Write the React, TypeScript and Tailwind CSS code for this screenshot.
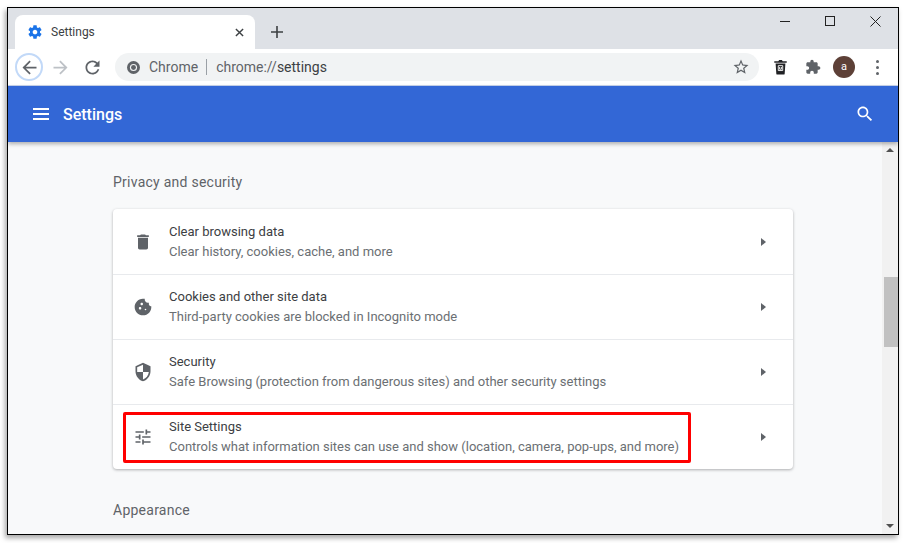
const paths = {
  back: 'M20 11H7.83l5.59-5.59L12 4l-8 8 8 8 1.41-1.41L7.83 13H20v-2z',
  forward: 'M12 4l-1.41 1.41L16.17 11H4v2h12.17l-5.58 5.59L12 20l8-8z',
  reload: 'M17.65 6.35C16.2 4.9 14.21 4 12 4c-4.42 0-7.99 3.58-7.99 8s3.57 8 7.99 8c3.73 0 6.84-2.55 7.73-6h-2.08c-.82 2.33-3.04 4-5.65 4-3.31 0-6-2.69-6-6s2.69-6 6-6c1.66 0 3.14.69 4.22 1.78L13 11h7V4l-2.35 2.35z',
  star: 'M22 9.24l-7.19-.62L12 2 9.19 8.63 2 9.24l5.46 4.73L5.82 21 12 17.27 18.18 21l-1.63-7.03L22 9.24zM12 15.4l-3.76 2.27 1-4.28-3.32-2.88 4.38-.38L12 6.1l1.71 4.04 4.38.38-3.32 2.88 1 4.28L12 15.4z',
  extension: 'M20.5 11H19V7c0-1.1-.9-2-2-2h-4V3.5C13 2.12 11.88 1 10.5 1S8 2.12 8 3.5V5H4c-1.1 0-1.99.9-1.99 2v3.8H3.5c1.49 0 2.7 1.21 2.7 2.7s-1.21 2.7-2.7 2.7H2V20c0 1.1.9 2 2 2h3.8v-1.5c0-1.49 1.21-2.7 2.7-2.7 1.49 0 2.7 1.21 2.7 2.7V22H17c1.1 0 2-.9 2-2v-4h1.5c1.38 0 2.5-1.12 2.5-2.5S21.88 11 20.5 11z',
  search: 'M15.5 14h-.79l-.28-.27C15.41 12.59 16 11.11 16 9.5 16 5.91 13.09 3 9.5 3S3 5.91 3 9.5 5.91 16 9.5 16c1.61 0 3.09-.59 4.23-1.57l.27.28v.79l5 4.99L20.49 19l-4.99-5zm-6 0C7.01 14 5 11.99 5 9.5S7.01 5 9.5 5 14 7.01 14 9.5 11.99 14 9.5 14z',
  gear: 'M19.43 12.98c.04-.32.07-.64.07-.98s-.03-.66-.07-.98l2.11-1.65c.19-.15.24-.42.12-.64l-2-3.46c-.12-.22-.39-.3-.61-.22l-2.49 1c-.52-.4-1.08-.73-1.69-.98l-.38-2.65C14.46 2.18 14.25 2 14 2h-4c-.25 0-.46.18-.49.42l-.38 2.65c-.61.25-1.17.59-1.69.98l-2.49-1c-.23-.09-.49 0-.61.22l-2 3.46c-.13.22-.07.49.12.64l2.11 1.65c-.04.32-.07.65-.07.98s.03.66.07.98l-2.11 1.65c-.19.15-.24.42-.12.64l2 3.46c.12.22.39.3.61.22l2.49-1c.52.4 1.08.73 1.69.98l.38 2.65c.03.24.24.42.49.42h4c.25 0 .46-.18.49-.42l.38-2.65c.61-.25 1.17-.59 1.69-.98l2.49 1c.23.09.49 0 .61-.22l2-3.46c.12-.22.07-.49-.12-.64l-2.11-1.65zM12 15.5c-1.93 0-3.5-1.57-3.5-3.5s1.57-3.5 3.5-3.5 3.5 1.57 3.5 3.5-1.57 3.5-3.5 3.5z',
  trash: 'M6 19c0 1.1.9 2 2 2h8c1.1 0 2-.9 2-2V7H6v12zM19 4h-3.5l-1-1h-5l-1 1H5v2h14V4z',
  cookie: 'M21.95 10.99c-1.79-.03-3.7-1.95-2.68-4.22-2.98 1-5.77-1.59-5.19-4.56C6.95.71 2 6.58 2 12c0 5.52 4.48 10 10 10 5.89 0 10.54-5.08 9.95-11.01zM8.5 15c-.83 0-1.5-.67-1.5-1.5S7.67 12 8.5 12s1.5.67 1.5 1.5S9.33 15 8.5 15zm2-5C9.67 10 9 9.33 9 8.5S9.67 7 10.5 7s1.5.67 1.5 1.5-.67 1.5-1.5 1.5zm4.5 6c-.55 0-1-.45-1-1s.45-1 1-1 1 .45 1 1-.45 1-1 1z',
  shield: 'M12 1L3 5v6c0 5.55 3.84 10.74 9 12 5.16-1.26 9-6.45 9-12V5l-9-4zm0 10.99h7c-.53 4.12-3.28 7.79-7 8.94V12H5V6.3l7-3.11v8.8z',
  tune: 'M3 17v2h6v-2H3zM3 5v2h10V5H3zm10 16v-2h8v-2h-8v-2h-2v6h2zM7 9v2H3v2h4v2h2V9H7zm14 4v-2H11v2h10zm-6-4h2V7h4V5h-4V3h-2v6z',
};

function Icon({ d, className }: { d: string; className: string }) {
  return (
    <svg viewBox="0 0 24 24" fill="currentColor" className={className}>
      <path d={d} />
    </svg>
  );
}

const rows = [
  { icon: paths.trash, title: 'Clear browsing data', sub: 'Clear history, cookies, cache, and more' },
  { icon: paths.cookie, title: 'Cookies and other site data', sub: 'Third-party cookies are blocked in Incognito mode' },
  { icon: paths.shield, title: 'Security', sub: 'Safe Browsing (protection from dangerous sites) and other security settings' },
  { icon: paths.tune, title: 'Site Settings', sub: 'Controls what information sites can use and show (location, camera, pop-ups, and more)' },
];

export default function App() {
  return (
    <div className="w-[907px] h-[543px] bg-white pl-[7px] pt-[7px] overflow-hidden font-['Roboto',sans-serif]">
      <div className="w-[892px] h-[528px] border border-black flex flex-col shadow-[-2px_3px_5px_rgba(0,0,0,0.35)] overflow-hidden">
        {/* tab strip */}
        <div className="h-[41px] bg-[#dee1e6] flex items-end pl-[7px] shrink-0">
          <div className="w-[240px] h-[34px] bg-white rounded-t-lg flex items-center pl-[12px] pr-[11px]">
            <Icon d={paths.gear} className="w-4 h-4 text-[#1a73e8]" />
            <span className="ml-[8px] text-[12px] text-[#3c4043] flex-1">Settings</span>
            <svg viewBox="0 0 10 10" className="w-[9px] h-[9px] text-[#3c4043]" stroke="currentColor" strokeWidth="1.6">
              <path d="M1 1l8 8M9 1l-8 8" />
            </svg>
          </div>
          <div className="h-[34px] w-[44px] flex items-center justify-center">
            <svg viewBox="0 0 12 12" className="w-3 h-3 text-[#3c4043]" stroke="currentColor" strokeWidth="1.6">
              <path d="M6 0v12M0 6h12" />
            </svg>
          </div>
          <div className="flex-1" />
          <div className="h-[41px] flex items-start pt-[7px] text-[#111]">
            <div className="w-[45px] h-[12px] flex justify-center items-center">
              <div className="w-[10px] h-px bg-[#222]" />
            </div>
            <div className="w-[46px] h-[12px] flex justify-center items-center">
              <div className="w-[10px] h-[10px] border border-[#222]" />
            </div>
            <div className="w-[45px] h-[12px] flex justify-center items-center">
              <svg viewBox="0 0 11 11" className="w-[11px] h-[11px]" stroke="#222" strokeWidth="1">
                <path d="M.5.5l10 10M10.500.5l-10 10" />
              </svg>
            </div>
          </div>
        </div>
        {/* toolbar */}
        <div className="h-[37px] bg-white border-b border-[#c9d5ee] flex items-center pl-[7px] shrink-0">
          <div className="w-[28px] h-[28px] rounded-full border-2 border-[#c2d9f8] flex items-center justify-center text-[#5f6368]">
            <Icon d={paths.back} className="w-[21px] h-[21px]" />
          </div>
          <Icon d={paths.forward} className="w-[21px] h-[21px] ml-[7px] text-[#bdc1c6]" />
          <Icon d={paths.reload} className="w-[21px] h-[21px] ml-[11px] text-[#5f6368]" />
          <div className="ml-[12px] w-[644px] h-[28px] rounded-full bg-[#f1f3f4] flex items-center pl-[12px] pr-[9px]">
            <svg viewBox="0 0 16 16" className="w-[13px] h-[13px]">
              <circle cx="8" cy="8" r="8" fill="#5f6368" />
              <circle cx="8" cy="8" r="4.4" fill="#f1f3f4" />
              <circle cx="8" cy="8" r="3" fill="#5f6368" />
            </svg>
            <span className="ml-[9px] text-[14px] text-[#5f6368]">Chrome</span>
            <div className="w-px h-[16px] bg-[#9aa0a6] ml-[8px]" />
            <span className="ml-[9px] text-[14px] text-[#5f6368] flex-1">
              chrome://<span className="text-[#3c4043]">settings</span>
            </span>
            <Icon d={paths.star} className="w-[18px] h-[18px] text-[#5f6368]" />
          </div>
          <svg viewBox="0 0 16 18" className="w-[15px] h-[16px] ml-[14px]">
            <path d="M1 2.500h4.500L6.500 1h3l1 1.500H15v1.600H1z" fill="#202124" />
            <path d="M2.500 5h11l-.8 11.500c0 .6-.5 1-1 1H4.300c-.5 0-1-.4-1-1z" fill="#202124" />
            <path d="M5.500 7.500h5v5.500h-5z M7 9v2.500h2V9" fill="none" stroke="#fff" strokeWidth="1" />
          </svg>
          <Icon d={paths.extension} className="w-[16px] h-[16px] ml-[17px] text-[#5f6368]" />
          <div className="w-[22px] h-[22px] rounded-full bg-[#5d4037] text-white text-[11px] flex items-center justify-center ml-[12px]">
            a
          </div>
          <div className="flex flex-col gap-[3px] ml-[21px]">
            <div className="w-[3px] h-[3px] rounded-full bg-[#5f6368]" />
            <div className="w-[3px] h-[3px] rounded-full bg-[#5f6368]" />
            <div className="w-[3px] h-[3px] rounded-full bg-[#5f6368]" />
          </div>
        </div>
        {/* settings header */}
        <div className="h-[56px] bg-[#3367d6] flex items-center pl-[25px] pr-[23px] shrink-0 relative z-10 shadow-[0_2px_4px_rgba(0,0,0,0.3)]">
          <div className="flex flex-col gap-[3px]">
            <div className="w-4 h-[2px] bg-white" />
            <div className="w-4 h-[2px] bg-white" />
            <div className="w-4 h-[2px] bg-white" />
          </div>
          <span className="ml-[14px] text-white text-[16px] leading-[20px] pt-px font-medium flex-1">Settings</span>
          <Icon d={paths.search} className="w-[20px] h-[20px] text-white" />
        </div>
        {/* scrolling content */}
        <div className="flex-1 flex min-h-0 bg-[#f8f9fa]">
          <div className="w-[874px] pl-[105px] pr-[89px] pt-[32px] overflow-hidden">
            <div className="text-[14px] leading-[15px] pt-px text-[#5f6368] tracking-[0.25px]">Privacy and security</div>
            <div className="mt-[19px] w-[680px] bg-white rounded shadow-[0_1px_3px_rgba(60,64,67,0.4)] relative">
              {rows.map((row, i) => (
                <div key={row.title} className={`h-[65px] flex items-center pl-[20px] pr-[27px] ${i ? 'border-t border-[#e8eaed]' : ''}`}>
                  <Icon d={row.icon} className="w-5 h-5 text-[#5f6368]" />
                  <div className="ml-[16px] flex-1">
                    <div className="text-[13px] leading-[20px] text-[#3c4043]">{row.title}</div>
                    <div className="text-[13px] leading-[20px] text-[#6b6f73]">{row.sub}</div>
                  </div>
                  <div className="w-0 h-0 border-y-[4px] border-y-transparent border-l-[5px] border-l-[#5f6368]" />
                </div>
              ))}
              <div className="absolute left-[10px] top-[203px] w-[568px] h-[51px] border-[3px] border-[#ff0000] rounded-[2px]" />
            </div>
            <div className="mt-[33px] text-[14px] leading-[15px] pt-px text-[#5f6368] tracking-[0.25px]">Appearance</div>
          </div>
          {/* scrollbar */}
          <div className="w-[16px] bg-[#f1f1f1] flex flex-col items-center">
            <div className="h-[16px] flex items-center justify-center">
              <div className="w-0 h-0 border-x-[4px] border-x-transparent border-b-[4px] border-b-[#505050]" />
            </div>
            <div className="w-[14px] ml-[2px] h-[70px] mt-[119px] bg-[#c1c1c1]" />
            <div className="flex-1" />
            <div className="h-[16px] flex items-center justify-center">
              <div className="w-0 h-0 border-x-[4px] border-x-transparent border-t-[4px] border-t-[#505050]" />
            </div>
          </div>
        </div>
      </div>
    </div>
  );
}
